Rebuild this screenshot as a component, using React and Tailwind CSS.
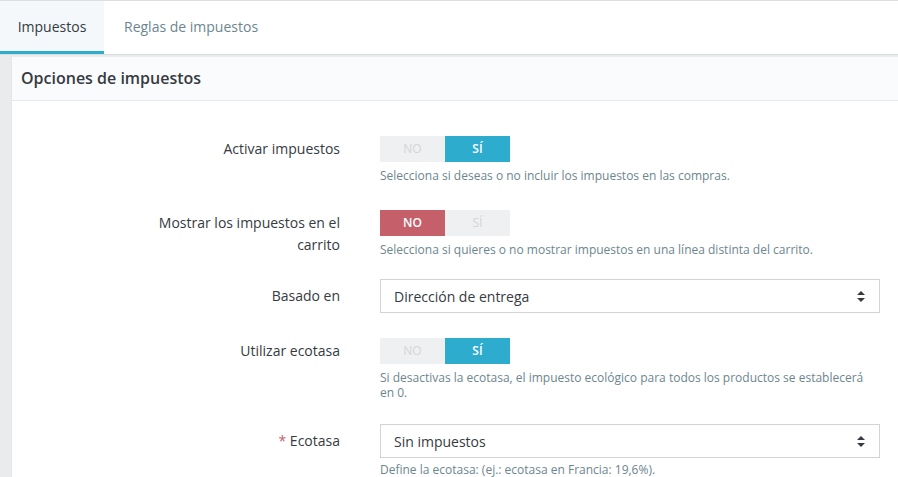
import React from 'react';

function Switch({ value }) {
  const on = value === 'yes';
  return (
    <div className="flex h-[26px] w-[130px] text-[12px] font-semibold">
      <div
        className={
          'flex-1 flex items-center justify-center ' +
          (on ? 'bg-[#eef0f1] text-[#d3d6d8] font-normal' : 'bg-[#c5606b] text-white')
        }
      >
        NO
      </div>
      <div
        className={
          'flex-1 flex items-center justify-center ' +
          (on ? 'bg-[#2eacce] text-white' : 'bg-[#eef0f1] text-[#d3d6d8] font-normal')
        }
      >
        SÍ
      </div>
    </div>
  );
}

function Select({ value }) {
  return (
    <div className="flex h-[34px] w-[500px] items-center justify-between border border-[#cfd4d6] bg-white pl-[13px] pr-[14px] text-[14px] text-[#363a41]">
      <span>{value}</span>
      <svg width="8" height="11" viewBox="0 0 8 11" fill="#363a41">
        <path d="M4 0 L8 4 H0 Z" />
        <path d="M0 7 H8 L4 11 Z" />
      </svg>
    </div>
  );
}

function Row({ label, children, help, helpGap = 'mt-[6px]', className = '' }) {
  return (
    <div className={'flex ' + className}>
      <div className="w-[328px] shrink-0 text-right text-[14px] leading-[22px] text-[#363a41] pt-[2px]">
        {label}
      </div>
      <div className="ml-[40px] flex flex-col">
        {children}
        {help && (
          <p className={helpGap + ' w-[500px] text-[12px] leading-[15px] text-[#6c868e]'}>{help}</p>
        )}
      </div>
    </div>
  );
}

export default function App() {
  return (
    <div className="min-h-screen w-[898px] overflow-hidden bg-[#eaebec]" style={{ fontFamily: '"Open Sans", sans-serif' }}>
      {/* Tabs */}
      <div className="flex h-[55px] border-t border-[#dcdfe0] border-b border-b-[#d9dcdd] bg-white">
        <div className="flex w-[104px] items-center justify-center border-b-[3px] border-[#2eacce] bg-[#f4f8fa] pt-[1px] text-[14px] text-[#363a41]">
          Impuestos
        </div>
        <div className="flex items-center px-[20px] pb-[2px] text-[14px] text-[#6c868e]">
          Reglas de impuestos
        </div>
      </div>

      {/* Panel */}
      <div className="ml-[11px] mt-[2px] bg-white border-l border-[#e4e6e7]">
        <div className="flex h-[44px] items-center border-b border-[#e6e8e9] bg-[#fafbfc] pl-[9px] pb-[2px] text-[16px] font-semibold text-[#363a41]">
          Opciones de impuestos
        </div>

        <div className="flex flex-col pt-[35px] pb-[20px]">
          <Row label="Activar impuestos" help="Selecciona si deseas o no incluir los impuestos en las compras.">
            <Switch value="yes" />
          </Row>

          <Row
            className="mt-[27px]"
            label={
              <span className="inline-block w-[200px]">
                Mostrar los impuestos en el carrito
              </span>
            }
            help="Selecciona si quieres o no mostrar impuestos en una línea distinta del carrito."
          >
            <Switch value="no" />
          </Row>

          <Row className="mt-[22px]" label={<span className="leading-[30px]">Basado en</span>}>
            <Select value="Dirección de entrega" />
          </Row>

          <Row
            className="mt-[25px]"
            label="Utilizar ecotasa"
            help="Si desactivas la ecotasa, el impuesto ecológico para todos los productos se establecerá en 0."
          >
            <Switch value="yes" />
          </Row>

          <Row
            className="mt-[24px]"
            helpGap="mt-[4px]"
            label={
              <span className="leading-[30px]">
                <span className="text-[#c5606b]">*</span> Ecotasa
              </span>
            }
            help="Define la ecotasa: (ej.: ecotasa en Francia: 19,6%)."
          >
            <Select value="Sin impuestos" />
          </Row>
        </div>
      </div>
    </div>
  );
}
